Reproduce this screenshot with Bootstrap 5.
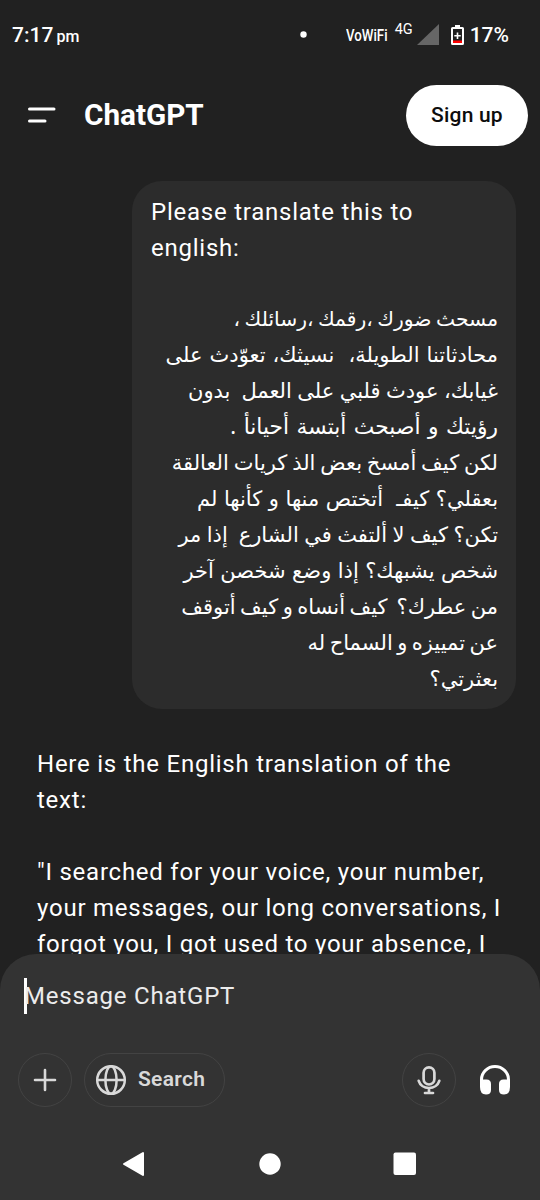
<!DOCTYPE html>
<html lang="en">
<head>
<meta charset="utf-8">
<meta name="viewport" content="width=device-width, initial-scale=1">
<title>ChatGPT</title>
<link href="https://cdn.jsdelivr.net/npm/bootstrap@5.3.0/dist/css/bootstrap.min.css" rel="stylesheet">
<style>
body{background:#212121;color:#fff;font-family:Roboto,"Noto Sans",sans-serif;height:1200px;overflow:hidden}
svg{display:block;flex:none}
.status-bar{height:70px;padding-left:12px;padding-right:31px;font-weight:500;line-height:24px}
.clock{font-size:21px;padding-top:1px}
.clock span{font-size:16px;margin-left:-2px}
.battery-text{font-size:21px}
.vowifi{font-size:17px;transform:scaleX(.78);transform-origin:left;width:42px;white-space:nowrap;margin-left:39px}
.net-4g{font-size:14.500px;font-weight:400;padding-bottom:11px;margin-left:7px}
.app-bar{height:90px;padding:0 12px 0 28px}
.app-title{font-size:29.700px;font-weight:700;line-height:36px;margin-left:28px}
.btn-signup{width:122px;height:61px;border-radius:31px;background:#fff;color:#0d0d0d;font-size:21px;font-weight:500;letter-spacing:.2px;padding:2px 0 0}
.chat{height:794px}
.body-text{font-size:24px;line-height:36px;letter-spacing:.76px;white-space:pre-line}
.bubble{width:384px;height:528px;margin:21px 24px 0 auto;padding:13px 18px 11px 19px;border-radius:30px;background:#2c2c2c}
.arabic{margin-top:34px}
.arabic div{font-family:"Noto Sans","DejaVu Sans",sans-serif;font-size:21px;line-height:36px;height:36px;letter-spacing:0;white-space:pre}
.arabic .ws-1{font-size:20.300px;word-spacing:-.8px}.ws-2{word-spacing:1.600px}.arabic .ws-4{font-size:21.800px;word-spacing:1.800px}.ws-5{word-spacing:-.6px}.ws-6{word-spacing:1.100px}.ws-8{word-spacing:1px}.ws-9{word-spacing:-1px}
.reply{margin:37px 24px 0 37px}
.composer{height:246px;border-radius:36px 36px 0 0;background:#333}
.prompt-line{padding:24px 24px 0;height:99px}
.caret{width:3px;height:36px;background:#fff}
.placeholder-text{font-size:24px;line-height:36px;letter-spacing:.8px;color:#ececec;margin-left:-3px}
.tools{padding:0 18px;height:54px}
.chip{height:54px;border:1px solid #434343;border-radius:27px;color:#d9d9d9}
.chip-round{width:54px}
.chip-search{width:141px;margin-left:12px;padding-left:10px;font-size:21px;font-weight:600;letter-spacing:.3px}
.chip-search span{margin-left:11px}
.headset{margin:0 12px 0 24px}
.nav-keys{height:72px;margin-top:21px;padding:0 123px 0 122px}
</style>
</head>
<body>
<header class="status-bar d-flex align-items-center">
  <div class="clock">7:17 <span>pm</span></div>
  <svg class="ms-auto" width="8" height="8"><circle cx="4.500" cy="3.500" r="3.200" fill="#fff"/></svg>
  <div class="vowifi">VoWiFi</div>
  <div class="net-4g">4G</div>
  <svg class="ms-1" width="22" height="22"><path d="M22 0V21H0Z" fill="#666"/></svg>
  <svg width="13" height="20" style="margin-left:12px"><path d="M4 0h5v2h2.500q1.500 0 1.500 1.500v15q0 1.500-1.500 1.500h-10q-1.500 0-1.500-1.500v-15q0-1.500 1.500-1.500H4Z" fill="#fff"/><path d="M2 4h9v12H2Z" fill="#212121"/><path d="M2 15.500h9v2.500H2Z" fill="#f00"/><path d="M5.700 7.500h1.600v2.400h2.400v1.600H7.300v2.400H5.700v-2.400H3.300V9.900h2.400Z" fill="#fff"/></svg>
  <div class="battery-text" style="margin-left:6px">17%</div>
</header>
<nav class="app-bar d-flex align-items-center">
  <svg width="28" height="16"><path d="M1.500 2H26M1.500 14H17" stroke="#fff" stroke-width="3" stroke-linecap="round"/></svg>
  <h1 class="app-title mb-0">ChatGPT</h1>
  <button class="btn btn-signup ms-auto">Sign up</button>
</nav>
<main class="chat overflow-hidden">
  <section class="bubble body-text"><div>Please translate this to
english:</div><div class="arabic" dir="rtl" lang="ar"><div class="ws-1">مسحث ضورك ،رقمك ،رسائلك ،</div><div class="ws-2">محادثاتنا الطويلة،  نسيثك، تعوّدث على</div><div>غيابك، عودث قلبي على العمل  بدون</div><div class="ws-4">رؤيتك و أصبحث أبتسة أحيانأ .</div><div class="ws-5">لكن كيف أمسخ بعض الذ كريات العالقة</div><div class="ws-6">بعقلي؟ كيفـ  أتختص منها و كأنها لم</div><div>تكن؟ كيف لا ألتفث في الشارع  إذا مر</div><div class="ws-8">شخص يشبهك؟ إذا وضع شخصن آخر</div><div class="ws-9">من عطرك؟  كيف أنساه و كيف أتوقف</div><div class="ws-9">عن تمييزه و السماح له</div><div>بعثرتي؟</div></div></section>
  <section class="reply body-text">Here is the English translation of the
text:

"I searched for your voice, your number,
your messages, our long conversations, I
forgot you, I got used to your absence, I</section>
</main>
<footer class="composer">
  <div class="prompt-line d-flex">
    <div class="caret"></div><div class="placeholder-text">Message ChatGPT</div>
  </div>
  <div class="tools d-flex align-items-center">
    <div class="chip chip-round d-flex align-items-center justify-content-center"><svg width="24" height="24"><path d="M12 2V22M2 12H22" stroke="#d9d9d9" stroke-width="2.600" stroke-linecap="round"/></svg></div>
    <div class="chip chip-search d-flex align-items-center"><svg width="32" height="32" fill="none" stroke="#d9d9d9" stroke-width="2.500"><circle cx="16" cy="16" r="13.800"/><ellipse cx="16" cy="16" rx="5.600" ry="13.800"/><path d="M2 16H30"/></svg><span>Search</span></div>
    <div class="chip chip-round ms-auto d-flex align-items-center justify-content-center"><svg width="26" height="30" fill="none" stroke="#d9d9d9" stroke-width="2.700" stroke-linecap="round"><rect x="7.600" y="2.300" width="10.800" height="17.200" rx="5.400"/><path d="M2.700 15.800C4 20 8 23 13 23S22 20 23.300 15.800M13 23V28M9 28H17"/></svg></div>
    <svg class="headset" width="30" height="30"><path d="M1.500 22V14.500A13.500 13 0 0 1 28.500 14.500V22" fill="none" stroke="#fff" stroke-width="3"/><path d="M0 14.500H6.500Q11 14.500 11 19V25Q11 29.500 6 29.500Q0 29.500 0 22ZM30 14.500H23.500Q19 14.500 19 19V25Q19 29.500 24 29.500Q30 29.500 30 22Z" fill="#fff"/></svg>
  </div>
  <div class="nav-keys d-flex align-items-center justify-content-between">
    <svg width="24" height="26"><path d="M2 13 21 2V24Z" fill="#fff" stroke="#fff" stroke-width="2" stroke-linejoin="round"/></svg>
    <svg width="22" height="22"><circle cx="11" cy="11" r="10.700" fill="#fff"/></svg>
    <svg width="24" height="24"><rect x=".5" y=".5" width="22.500" height="22.500" rx="2" fill="#fff"/></svg>
  </div>
</footer>
<script src="https://cdn.jsdelivr.net/npm/bootstrap@5.3.0/dist/js/bootstrap.bundle.min.js"></script>
</body>
</html>
